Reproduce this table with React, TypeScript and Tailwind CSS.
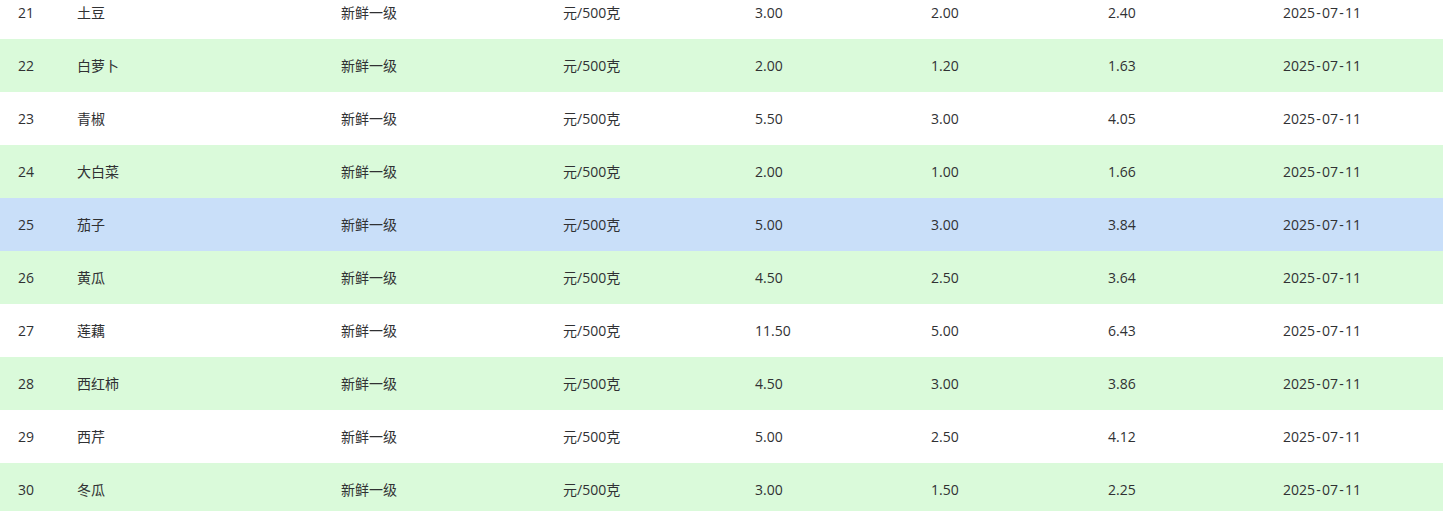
const rows = [
  { id: 21, name: '土豆', price: ['3.00', '2.00', '2.40'] },
  { id: 22, name: '白萝卜', price: ['2.00', '1.20', '1.63'] },
  { id: 23, name: '青椒', price: ['5.50', '3.00', '4.05'] },
  { id: 24, name: '大白菜', price: ['2.00', '1.00', '1.66'] },
  { id: 25, name: '茄子', price: ['5.00', '3.00', '3.84'] },
  { id: 26, name: '黄瓜', price: ['4.50', '2.50', '3.64'] },
  { id: 27, name: '莲藕', price: ['11.50', '5.00', '6.43'] },
  { id: 28, name: '西红柿', price: ['4.50', '3.00', '3.86'] },
  { id: 29, name: '西芹', price: ['5.00', '2.50', '4.12'] },
  { id: 30, name: '冬瓜', price: ['3.00', '1.50', '2.25'] },
]

function rowBg(id: number) {
  if (id === 25) return 'bg-[#c9dff9]'
  return id % 2 === 0 ? 'bg-[#dafada]' : 'bg-white'
}

// hyphens in the source font are wider than Open Sans's
function DateText() {
  return (
    <span>
      2025<span className="px-[1.25px]">-</span>07<span className="px-[1.25px]">-</span>11
    </span>
  )
}

export default function App() {
  return (
    <div className="h-[511px] w-full overflow-hidden bg-white text-[14px] text-[#303133] [font-family:'Open_Sans','Noto_Sans_CJK_SC',sans-serif]">
      <div className="-mt-[14.5px]">
        {rows.map((r) => (
          <div
            key={r.id}
            className={`grid h-[53px] grid-cols-[77px_264px_222px_192px_176px_177px_175px_1fr] items-center ${rowBg(r.id)}`}
          >
            <div className="pl-[18px]">{r.id}</div>
            <div>{r.name}</div>
            <div>新鲜一级</div>
            <div>元/500克</div>
            <div>{r.price[0]}</div>
            <div>{r.price[1]}</div>
            <div>{r.price[2]}</div>
            <div>
              <DateText />
            </div>
          </div>
        ))}
      </div>
    </div>
  )
}
